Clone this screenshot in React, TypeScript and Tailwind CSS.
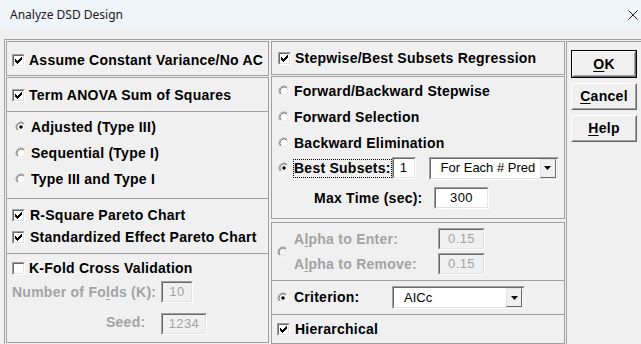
const font = "font-['Liberation_Sans',Arial,sans-serif]";

function CheckMark() {
  return (
    <svg width="7" height="7" viewBox="0 0 7 7" shapeRendering="crispEdges" fill="#000">
      <rect x="6" y="0" width="1" height="1" />
      <rect x="5" y="1" width="2" height="1" />
      <rect x="0" y="2" width="1" height="1" />
      <rect x="4" y="2" width="3" height="1" />
      <rect x="0" y="3" width="2" height="1" />
      <rect x="3" y="3" width="3" height="1" />
      <rect x="0" y="4" width="5" height="1" />
      <rect x="1" y="5" width="3" height="1" />
      <rect x="2" y="6" width="1" height="1" />
    </svg>
  );
}

function Check({ on }: { on?: boolean }) {
  return (
    <span className="flex h-[13px] w-[13px] shrink-0 border border-t-[#a0a0a0] border-l-[#a0a0a0] border-r-white border-b-white">
      <span className="flex flex-1 items-center justify-center border border-t-[#696969] border-l-[#696969] border-r-[#e3e3e3] border-b-[#e3e3e3] bg-white">
        {on && <CheckMark />}
      </span>
    </span>
  );
}

function Radio({ on, disabled }: { on?: boolean; disabled?: boolean }) {
  return (
    <svg width="12" height="12" viewBox="0 0 12 12" className="shrink-0">
      <circle cx="6" cy="6" r="4" fill={disabled ? "#f0f0f0" : "#ffffff"} />
      <path d="M2.46 9.54 A5 5 0 0 1 9.54 2.46" stroke="#a0a0a0" fill="none" />
      <path d="M9.54 2.46 A5 5 0 0 1 2.46 9.54" stroke="#ffffff" fill="none" />
      <path d="M3.17 8.83 A4 4 0 0 1 8.83 3.17" stroke="#7a7a7a" fill="none" />
      <path d="M8.83 3.17 A4 4 0 0 1 3.17 8.83" stroke="#e3e3e3" fill="none" />
      {on && <circle cx="6" cy="6" r="1.8" fill="#000" />}
    </svg>
  );
}

function Field({ value, w, disabled }: { value: string; w: string; disabled?: boolean }) {
  return (
    <span className={`flex h-[22px] shrink-0 border border-t-[#a0a0a0] border-l-[#a0a0a0] border-r-white border-b-white ${w}`}>
      <span
        className={`flex flex-1 items-center justify-center border border-t-[#696969] border-l-[#696969] border-r-[#e3e3e3] border-b-[#e3e3e3] text-[13px] font-normal tracking-[0.4px] ${
          disabled ? "bg-[#f0f0f0] text-[#a3a3a3]" : "bg-white text-black"
        }`}
      >
        {value}
      </span>
    </span>
  );
}

function Select({ value, w }: { value: string; w: string }) {
  return (
    <span className={`flex h-[23px] shrink-0 border border-t-[#a0a0a0] border-l-[#a0a0a0] border-r-white border-b-white ${w}`}>
      <span className="flex flex-1 items-center border border-t-[#696969] border-l-[#696969] border-r-[#e3e3e3] border-b-[#e3e3e3] bg-white pl-[10px] pr-[1px] text-[13px] font-normal tracking-normal">
        <span className="flex-1">{value}</span>
        <span className="flex h-[19px] w-[16px] items-center justify-center border border-t-[#e3e3e3] border-l-[#e3e3e3] border-r-[#696969] border-b-[#696969] bg-[#f0f0f0]">
          <svg width="7" height="4" viewBox="0 0 7 4">
            <path d="M0 0 H7 L3.5 4 Z" fill="#000" />
          </svg>
        </span>
      </span>
    </span>
  );
}

function Button({ label, rest, def }: { label: string; rest: string; def?: boolean }) {
  const face = (
    <span className="flex flex-1 border border-t-white border-l-white border-r-[#696969] border-b-[#696969]">
      <span className="flex flex-1 items-center justify-center border border-t-[#f0f0f0] border-l-[#f0f0f0] border-r-[#a0a0a0] border-b-[#a0a0a0] text-[14px] font-bold tracking-[0.3px]">
        <span className="underline underline-offset-2">{label}</span>
        {rest}
      </span>
    </span>
  );
  if (def) {
    return <span className="flex h-[28px] w-[66px] border border-black">{face}</span>;
  }
  return <span className="flex h-[27px] w-[66px]">{face}</span>;
}

export default function App() {
  return (
    <div className={`h-[344px] w-[641px] overflow-hidden bg-[#f0f0f0] text-black ${font}`}>
      <div className="flex h-[30px] items-center justify-between bg-[#eff4f9] pl-[10px] pr-[3px]">
        <span className="font-['Noto_Sans',sans-serif] text-[12px] text-[#1a1a1a]">Analyze DSD Design</span>
        <svg width="10" height="10" viewBox="0 0 10 10">
          <path d="M0.5 0.5 L9.5 9.5 M9.5 0.5 L0.5 9.5" stroke="#222" strokeWidth="1" />
        </svg>
      </div>

      <div className="pl-[4px] pt-[9px]">
        <div className="flex border-l border-t border-[#a0a0a0] pl-[1px] pt-[1px]">
          {/* left column */}
          <div className="flex w-[263px] shrink-0 flex-col text-[14px] font-bold tracking-[0.25px]">
            <div className="flex h-[35px] items-center border border-[#a0a0a0] pl-[5px] pt-[4px]">
              <Check on />
              <span className="ml-[4px]">Assume Constant Variance/No AC</span>
            </div>
            <div className="mt-[1px] flex h-[266px] flex-col border border-[#a0a0a0]">
              <div className="flex h-[34px] items-center border-b border-[#a0a0a0] pl-[5px] pt-[2px]">
                <Check on />
                <span className="ml-[4px]">Term ANOVA Sum of Squares</span>
              </div>
              <div className="flex h-[87px] flex-col border-b border-[#a0a0a0] pl-[8px] pt-[2px]">
                <div className="flex h-[26px] items-center">
                  <Radio on />
                  <span className="ml-[4px]">Adjusted (Type III)</span>
                </div>
                <div className="flex h-[26px] items-center">
                  <Radio />
                  <span className="ml-[4px]">Sequential (Type I)</span>
                </div>
                <div className="flex h-[26px] items-center">
                  <Radio />
                  <span className="ml-[4px]">Type III and Type I</span>
                </div>
              </div>
              <div className="flex h-[55px] flex-col border-b border-[#a0a0a0] pl-[5px] pt-[5px]">
                <div className="flex h-[22px] items-center">
                  <Check on />
                  <span className="ml-[5px]">R-Square Pareto Chart</span>
                </div>
                <div className="flex h-[22px] items-center">
                  <Check on />
                  <span className="ml-[5px]">Standardized Effect Pareto Chart</span>
                </div>
              </div>
              <div className="flex flex-1 flex-col pl-[5px] pt-[3px]">
                <div className="flex h-[22px] items-center">
                  <Check />
                  <span className="ml-[4px]">K-Fold Cross Validation</span>
                </div>
                <div className="mt-[1px] flex items-center">
                  <span className="w-[149px] pt-[2px] text-[#a3a3a3]">
                    Number of Fo<span className="underline underline-offset-2">l</span>ds (K):
                  </span>
                  <Field value="10" w="w-[32px]" disabled />
                </div>
                <div className="mt-[10px] flex items-start">
                  <span className="w-[149px] pl-[94px] text-[#a3a3a3] leading-[18px]">Seed:</span>
                  <Field value="1234" w="w-[46px]" disabled />
                </div>
              </div>
            </div>
          </div>

          {/* middle column */}
          <div className="ml-[2px] flex w-[294px] shrink-0 flex-col text-[14px] font-bold tracking-[0.25px]">
            <div className="flex h-[34px] items-center border border-[#a0a0a0] pl-[6px]">
              <Check on />
              <span className="ml-[4px]">Stepwise/Best Subsets Regression</span>
            </div>
            <div className="mt-[1px] flex h-[143px] flex-col border border-[#a0a0a0] pl-[6px] pt-[1px]">
              <div className="flex h-[26px] items-center">
                <Radio />
                <span className="ml-[4px]">Forward/Backward Stepwise</span>
              </div>
              <div className="flex h-[26px] items-center">
                <Radio />
                <span className="ml-[4px]">Forward Selection</span>
              </div>
              <div className="flex h-[26px] items-center">
                <Radio />
                <span className="ml-[4px]">Backward Elimination</span>
              </div>
              <div className="flex h-[24px] items-center">
                <Radio on />
                <span className="ml-[3px] border border-dotted border-black leading-[17px]">Best Subsets:</span>
                <Field value="1" w="w-[24px]" />
                <span className="ml-[13px]">
                  <Select value="For Each # Pred" w="w-[130px]" />
                </span>
              </div>
              <div className="mt-[7px] flex items-center pl-[36px]">
                <span className="w-[120px]">Max Time (sec):</span>
                <Field value="300" w="w-[55px]" />
              </div>
            </div>
            <div className="mt-[3px] flex h-[122px] flex-col border border-[#a0a0a0]">
              <div className="flex h-[58px] items-center border-b border-[#a0a0a0] pl-[5px]">
                <Radio disabled />
                <div className="ml-[5px] flex flex-col text-[#a3a3a3]">
                  <div className="flex items-center">
                    <span className="w-[144px]">
                      A<span className="underline underline-offset-2">l</span>pha to Enter:
                    </span>
                    <Field value="0.15" w="w-[47px]" disabled />
                  </div>
                  <div className="mt-[3px] flex items-center">
                    <span className="w-[144px]">
                      A<span className="underline underline-offset-2">l</span>pha to Remove:
                    </span>
                    <Field value="0.15" w="w-[47px]" disabled />
                  </div>
                </div>
              </div>
              <div className="flex h-[34px] items-center border-b border-[#a0a0a0] pl-[5px]">
                <Radio on />
                <span className="ml-[5px] w-[98px]">Criterion:</span>
                <Select value="AICc" w="w-[133px]" />
              </div>
              <div className="flex flex-1 items-center pl-[5px]">
                <Check on />
                <span className="ml-[5px]">Hierarchical</span>
              </div>
            </div>
          </div>

          {/* button column */}
          <div className="ml-[1px] flex h-[310px] w-[100px] shrink-0 flex-col gap-[5px] border-l border-t border-[#a0a0a0] pl-[4px] pt-[8px]">
            <Button label="O" rest="K" def />
            <Button label="C" rest="ancel" />
            <Button label="H" rest="elp" />
          </div>
        </div>
      </div>
    </div>
  );
}
